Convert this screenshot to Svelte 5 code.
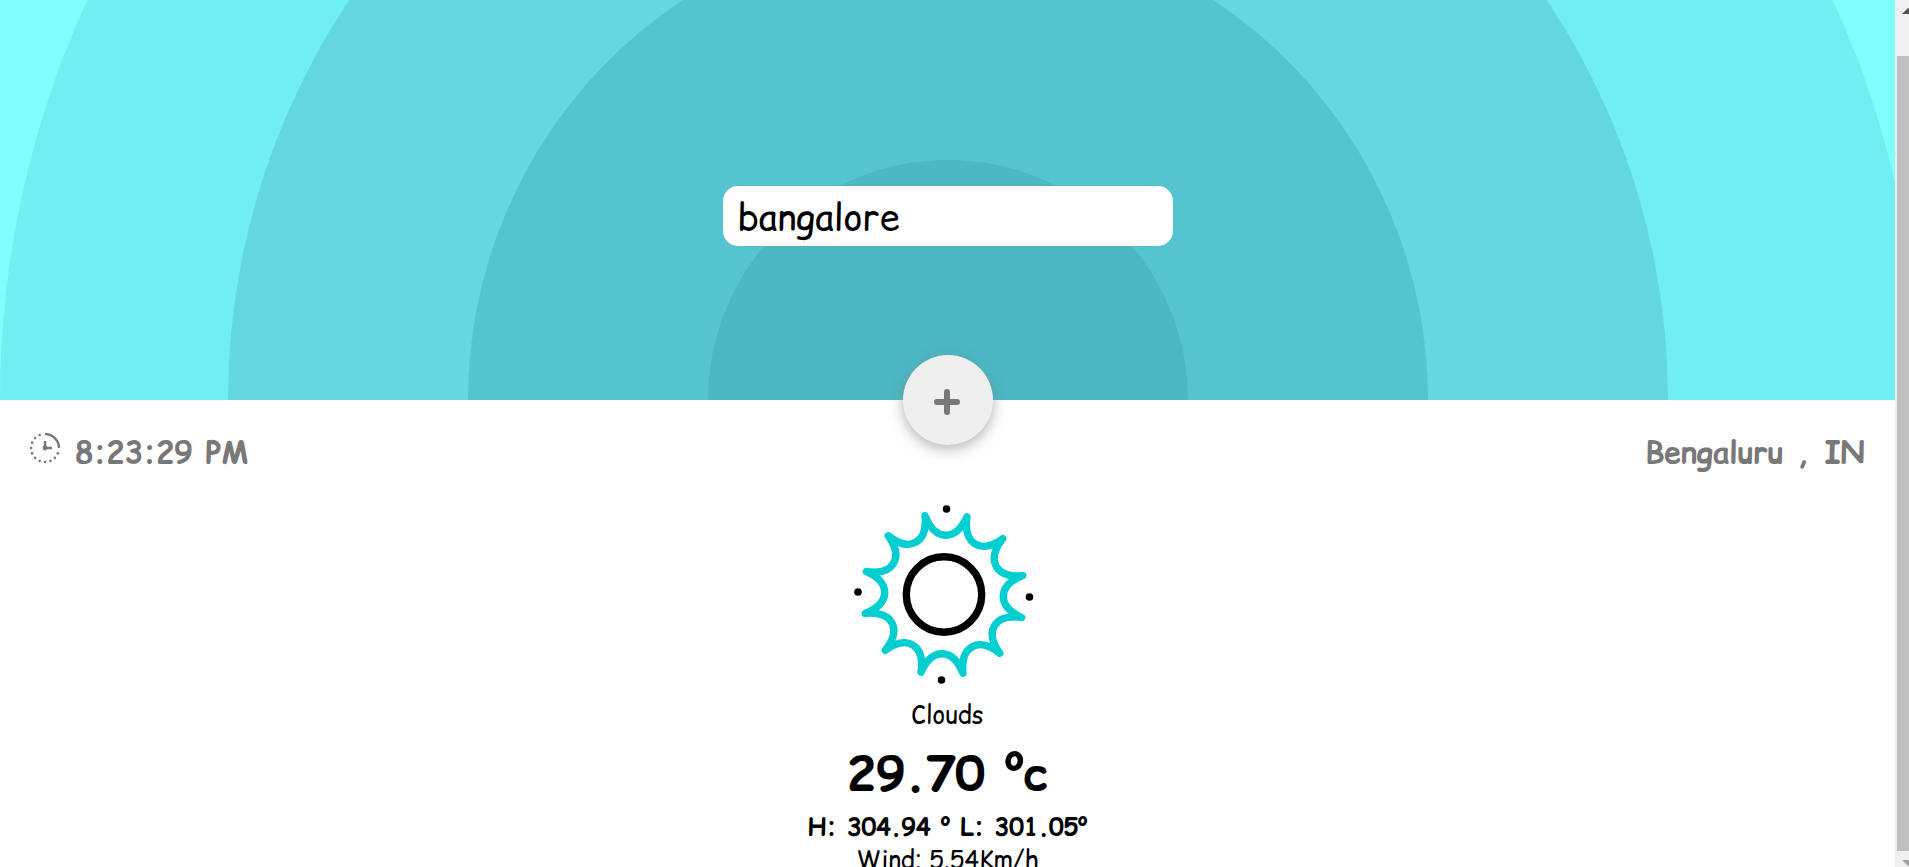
<script>
  let city = $state('bangalore');
  const rings = [
    { size: 1920, tone: 'outer' },
    { size: 1440, tone: 'wide' },
    { size: 960, tone: 'middle' },
    { size: 480, tone: 'inner' }
  ];
  // One petal tip every 30 degrees, with curved valleys between the tips.
  const tips = Array.from({ length: 12 }, (_, i) => {
    const a = ((i * 30 - 73.5) * Math.PI) / 180;
    return [104 + 81 * Math.cos(a), 104.5 + 81 * Math.sin(a)];
  });
  const valleys = tips.map((_, i) => {
    const at = (r, d) => {
      const a = ((i * 30 - 73.5 + d) * Math.PI) / 180;
      return `${104 + r * Math.cos(a)} ${104.5 + r * Math.sin(a)}`;
    };
    return `C${at(54, 4)} ${at(54, 26)} ${at(81, 30)}`;
  });
  const burst = `M${tips[0].join(' ')}${valleys.join('')}Z`;
  const dots = Array.from({ length: 11 }, (_, i) => {
    const a = ((i * 22.5 + 22.5) * Math.PI) / 180;
    return [15 + 14 * Math.cos(a), 15 + 14 * Math.sin(a)];
  });
</script>

<div class="window">
  <main>
    <header>
      <div class="rings" aria-hidden="true">
        {#each rings as ring}
          <span class={ring.tone} style:width="{ring.size}px" style:height="{ring.size}px"></span>
        {/each}
      </div>
      <form onsubmit={(e) => e.preventDefault()}>
        <input type="text" aria-label="City" bind:value={city} />
        <button aria-label="Add city">
          <svg viewBox="0 0 30 30" width="30" height="30"><path d="M14 7v20M4 17h20" /></svg>
        </button>
      </form>
    </header>

    <div class="info">
      <div class="time">
        <svg viewBox="0 0 30 30" width="30" height="30">
          <path d="M15 1a14 14 0 0 1 14 14M15 8v7h7" />
          {#each dots as [x, y]}<circle cx={x} cy={y} r="1.3" />{/each}
          <circle cx="15" cy="15" r="2.4" />
        </svg>
        <span>8:23:29 PM</span>
      </div>
      <div class="place"><span>Bengaluru</span><span>,</span><span>IN</span></div>
    </div>

    <section>
      <svg class="sun" viewBox="0 0 210 208" width="210" height="208">
        <path d={burst} />
        <circle class="disc" cx="104" cy="104.5" r="37.7" />
        <circle cx="106.5" cy="19" r="3.8" />
        <circle cx="189.5" cy="107" r="3.8" />
        <circle cx="101.5" cy="190" r="3.8" />
        <circle cx="18" cy="102" r="3.8" />
      </svg>
      <p>Clouds</p>
      <h1>29.70 <span class="degree">º</span>c</h1>
      <h2>H: 304.94 <span class="degree">º</span> L: 301.05<span class="degree">º</span></h2>
      <p>Wind: 5.54Km/h</p>
    </section>
  </main>
  <div class="scrollbar" aria-hidden="true">
    <svg viewBox="0 0 12 14" width="12" height="14"><path d="M5 14l6-6 6 6z" fill="#505050" /></svg>
    <span class="thumb"></span>
    <svg viewBox="0 0 12 14" width="12" height="14"><path d="M5 7h12l-6 6z" fill="#a0a0a0" /></svg>
  </div>
</div>

<style>
  :global(body) {
    margin: 0;
    overflow: hidden;
  }
  .window {
    display: flex;
    height: 100vh;
    overflow: hidden;
    background: #fff;
    color: #000;
    font-family: 'Comic Relief', 'Comic Sans MS', 'Comic Neue', Lato, sans-serif;
  }
  main {
    flex: 1;
    min-width: 0;
    overflow: hidden;
  }
  header {
    position: relative;
    height: 400px;
    background: #7fffff;
  }
  .rings {
    position: absolute;
    inset: 0;
    overflow: hidden;
  }
  .rings span {
    position: absolute;
    top: 400px;
    left: 50%;
    border-radius: 50%;
    transform: translate(-50%, -50%);
  }
  .rings .outer {
    left: 960px;
    background: #71eef2;
  }
  .rings .wide {
    background: #63d8de;
  }
  .rings .middle {
    background: #54c5ce;
  }
  .rings .inner {
    background: #4bb8c3;
  }
  form {
    position: relative;
    display: flex;
    flex-direction: column;
    align-items: center;
    justify-content: space-between;
    height: 259px;
    padding-top: 186px;
  }
  input {
    box-sizing: border-box;
    width: 450px;
    height: 60px;
    padding: 2px 15px 0;
    border: 0;
    border-radius: 15px;
    outline: 0;
    background: #fff;
    color: #000;
    font: inherit;
    font-size: 36px;
  }
  button {
    display: grid;
    place-items: center;
    width: 90px;
    height: 90px;
    padding: 0;
    border: 0;
    border-radius: 50%;
    background: #efefef;
    box-shadow: 0 4px 14px rgb(128 128 128 / 0.6);
  }
  button path {
    fill: none;
    stroke: #787878;
    stroke-width: 6;
    stroke-linecap: round;
  }
  .info {
    display: flex;
    justify-content: space-between;
    padding: 30px 30px 0;
    color: #787878;
    font-size: 30px;
    font-weight: 700;
    line-height: 44px;
  }
  .time,
  .place {
    display: flex;
    gap: 15px;
  }
  .place {
    gap: 14px;
  }
  .time svg {
    margin-top: 3px;
    fill: #787878;
  }
  .time path {
    fill: none;
    stroke: #787878;
    stroke-width: 2.5;
  }
  section {
    display: flex;
    flex-direction: column;
    align-items: center;
    padding-top: 16px;
  }
  .sun {
    margin-right: 5px;
  }
  .sun path,
  .sun .disc {
    fill: none;
    stroke: #00ced1;
    stroke-width: 7.4;
    stroke-linecap: round;
    stroke-linejoin: round;
  }
  .sun .disc {
    stroke: #000;
  }
  p,
  h1,
  h2 {
    margin: 0;
  }
  p {
    font-size: 24px;
    line-height: 34px;
  }
  h1 {
    padding: 7px 0 4px;
    font-size: 48px;
    line-height: 68px;
  }
  h2 {
    font-size: 24px;
    line-height: 32px;
  }
  .degree {
    font-family: 'Comic Neue', 'Comic Sans MS', sans-serif;
    font-size: 125%;
    line-height: 0;
  }
  .scrollbar {
    box-sizing: border-box;
    display: flex;
    flex-direction: column;
    gap: 2px;
    width: 14px;
    padding-left: 2px;
    background: #f0f0f0;
  }
  .thumb {
    flex: 1;
    margin-top: 40px;
    background: #c0c0c0;
  }
</style>
